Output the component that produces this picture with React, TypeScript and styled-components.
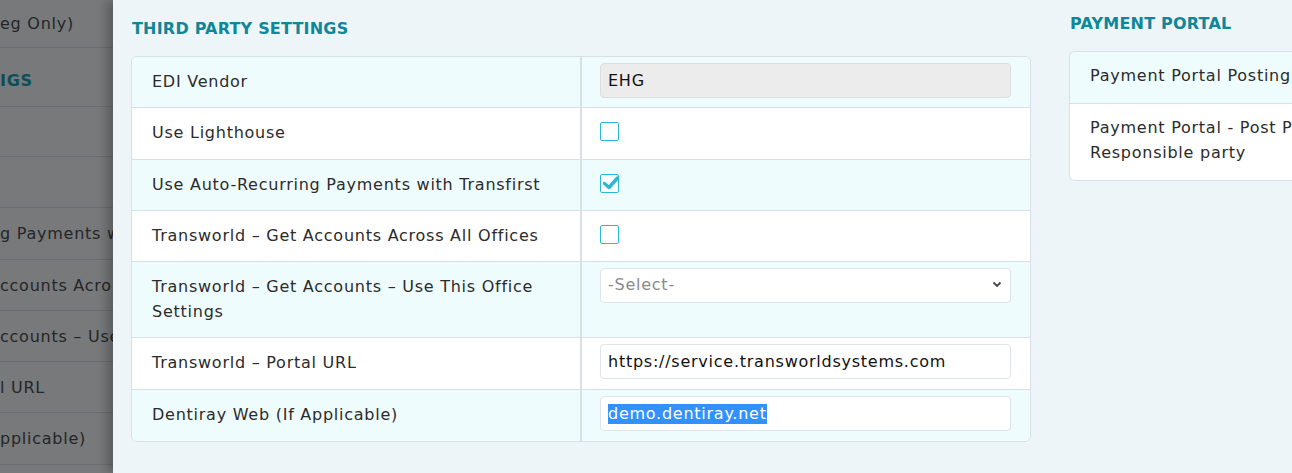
import styled, { createGlobalStyle } from 'styled-components'

const GlobalStyle = createGlobalStyle`
  html, body {
    margin: 0;
    padding: 0;
    background: #eef5f8;
    font-family: 'DejaVu Sans', 'Noto Sans', sans-serif;
    color: #2b2b2b;
  }
  * { box-sizing: border-box; }
`

const Page = styled.div`
  display: flex;
  width: 1292px;
  height: 473px;
  overflow: hidden;
  font-size: 16px;
  letter-spacing: 0.75px;
`

const Backdrop = styled.div`
  width: 113px;
  flex-shrink: 0;
  background: #77797b;
  display: flex;
  flex-direction: column;
  overflow: hidden;
`

const BackdropRow = styled.div<{ $h: number; $teal?: boolean }>`
  height: ${(p) => p.$h}px;
  flex-shrink: 0;
  border-bottom: 1px solid #6a6d6f;
  display: flex;
  align-items: center;
  white-space: nowrap;
  padding-top: ${(p) => (p.$teal ? 6 : 0)}px;
  color: ${(p) => (p.$teal ? '#0d4f58' : '#252627')};
  font-weight: ${(p) => (p.$teal ? 600 : 400)};
`

const Drawer = styled.div`
  flex: 1;
  background: #eef5f8;
  box-shadow: -6px 0 10px rgba(0, 0, 0, 0.25);
  display: flex;
  gap: 38px;
  padding: 0 0 0 18px;
  min-width: 0;
`

const Column = styled.section<{ $w?: number }>`
  width: ${(p) => (p.$w ? `${p.$w}px` : 'auto')};
  flex: ${(p) => (p.$w ? '0 0 auto' : '1 1 auto')};
  min-width: 0;
`

const Heading = styled.h2<{ $top: number; $below: number }>`
  margin: ${(p) => p.$top}px 0 0 1px;
  height: ${(p) => p.$below}px;
  font-size: 16px;
  font-weight: 600;
  color: #0f8699;
  text-transform: uppercase;
  letter-spacing: 0.2px;
`

const Card = styled.div<{ $openRight?: boolean }>`
  background: #fff;
  border: 1px solid #d9dfe8;
  border-radius: ${(p) => (p.$openRight ? '6px 0 0 6px' : '6px')};
  border-right: ${(p) => (p.$openRight ? 'none' : '1px solid #d9dfe8')};
  overflow: hidden;
  white-space: ${(p) => (p.$openRight ? 'nowrap' : 'normal')};
`

const Row = styled.div<{ $h: number; $alt?: boolean }>`
  display: grid;
  grid-template-columns: 450px 1fr;
  height: ${(p) => p.$h}px;
  background: ${(p) => (p.$alt ? '#effcfe' : '#fff')};
  border-top: 1px solid #d9dfe8;
  &:first-child {
    border-top: none;
  }
`

const Label = styled.div`
  padding: 12px 20px 0 20px;
  line-height: 25px;
  color: #2b2b2b;
  border-right: 2px solid #d9dfe8;
`

const Field = styled.div`
  padding: 6px 19px 0 18px;
`

const TextBox = styled.div<{ $disabled?: boolean }>`
  height: 35px;
  border: 1px solid ${(p) => (p.$disabled ? '#dcdde0' : '#dfe3ec')};
  border-radius: 4px;
  background: ${(p) => (p.$disabled ? '#ececec' : '#fff')};
  padding: 0 7px;
  display: flex;
  align-items: center;
  color: #111;
  white-space: nowrap;
  overflow: hidden;
`

const Selected = styled.span`
  background: #3390ff;
  color: #fff;
  line-height: 20px;
`

const SelectBox = styled(TextBox)`
  justify-content: space-between;
  color: #8a8a8a;
  padding-bottom: 3px;
  padding-right: 8px;
`

const Check = styled.div`
  width: 19px;
  height: 19px;
  margin-top: 8px;
  border: 1.5px solid #2bb8d8;
  border-radius: 2px;
  background: #fff;
  position: relative;
  svg {
    position: absolute;
    left: 1px;
    top: 0px;
  }
`

const PortalRow = styled.div<{ $h: number; $alt?: boolean }>`
  height: ${(p) => p.$h}px;
  background: ${(p) => (p.$alt ? '#effcfe' : '#fff')};
  border-top: 1px solid #d9dfe8;
  padding: 11px 20px 0 20px;
  line-height: 25px;
  overflow: hidden;
  &:first-child {
    border-top: none;
  }
`

function CheckBox({ checked }: { checked?: boolean }) {
  return (
    <Check>
      {checked && (
        <svg width="18" height="16" viewBox="0 0 18 16">
          <path d="M2.5 8.5 L7 12.5 L15.5 3" fill="none" stroke="#2bb8d8" strokeWidth="3.4" strokeLinecap="round" strokeLinejoin="round" />
        </svg>
      )}
    </Check>
  )
}

function App() {
  return (
    <Page>
      <GlobalStyle />
      <Backdrop>
        <BackdropRow $h={48}>eg Only)</BackdropRow>
        <BackdropRow $h={59} $teal>IGS</BackdropRow>
        <BackdropRow $h={50} />
        <BackdropRow $h={51} />
        <BackdropRow $h={52}>g Payments w</BackdropRow>
        <BackdropRow $h={51}>ccounts Acro</BackdropRow>
        <BackdropRow $h={51}>ccounts – Use</BackdropRow>
        <BackdropRow $h={51}>l URL</BackdropRow>
        <BackdropRow $h={52}>pplicable)</BackdropRow>
        <BackdropRow $h={50} />
      </Backdrop>
      <Drawer>
        <Column $w={900}>
          <Heading $top={19} $below={37}>Third Party Settings</Heading>
          <Card>
            <Row $h={50} $alt>
              <Label>EDI Vendor</Label>
              <Field>
                <TextBox $disabled>EHG</TextBox>
              </Field>
            </Row>
            <Row $h={52}>
              <Label>Use Lighthouse</Label>
              <Field>
                <CheckBox />
              </Field>
            </Row>
            <Row $h={51} $alt>
              <Label>Use Auto-Recurring Payments with Transfirst</Label>
              <Field>
                <CheckBox checked />
              </Field>
            </Row>
            <Row $h={51}>
              <Label>Transworld – Get Accounts Across All Offices</Label>
              <Field>
                <CheckBox />
              </Field>
            </Row>
            <Row $h={76} $alt>
              <Label>Transworld – Get Accounts – Use This Office Settings</Label>
              <Field>
                <SelectBox>
                  -Select-
                  <svg width="10" height="7" viewBox="0 0 10 7">
                    <path d="M1.5 1.5 L5 5 L8.5 1.5" fill="none" stroke="#444" strokeWidth="1.8" />
                  </svg>
                </SelectBox>
              </Field>
            </Row>
            <Row $h={52}>
              <Label>Transworld – Portal URL</Label>
              <Field>
                <TextBox>https://service.transworldsystems.com</TextBox>
              </Field>
            </Row>
            <Row $h={52} $alt>
              <Label>Dentiray Web (If Applicable)</Label>
              <Field>
                <TextBox>
                  <Selected>demo.dentiray.net</Selected>
                </TextBox>
              </Field>
            </Row>
          </Card>
        </Column>
        <Column>
          <Heading $top={14} $below={37}>Payment Portal</Heading>
          <Card $openRight>
            <PortalRow $h={51} $alt>Payment Portal Posting Options</PortalRow>
            <PortalRow $h={77}>
              Payment Portal - Post Payments to
              <br />
              Responsible party
            </PortalRow>
          </Card>
        </Column>
      </Drawer>
    </Page>
  )
}

export default App
